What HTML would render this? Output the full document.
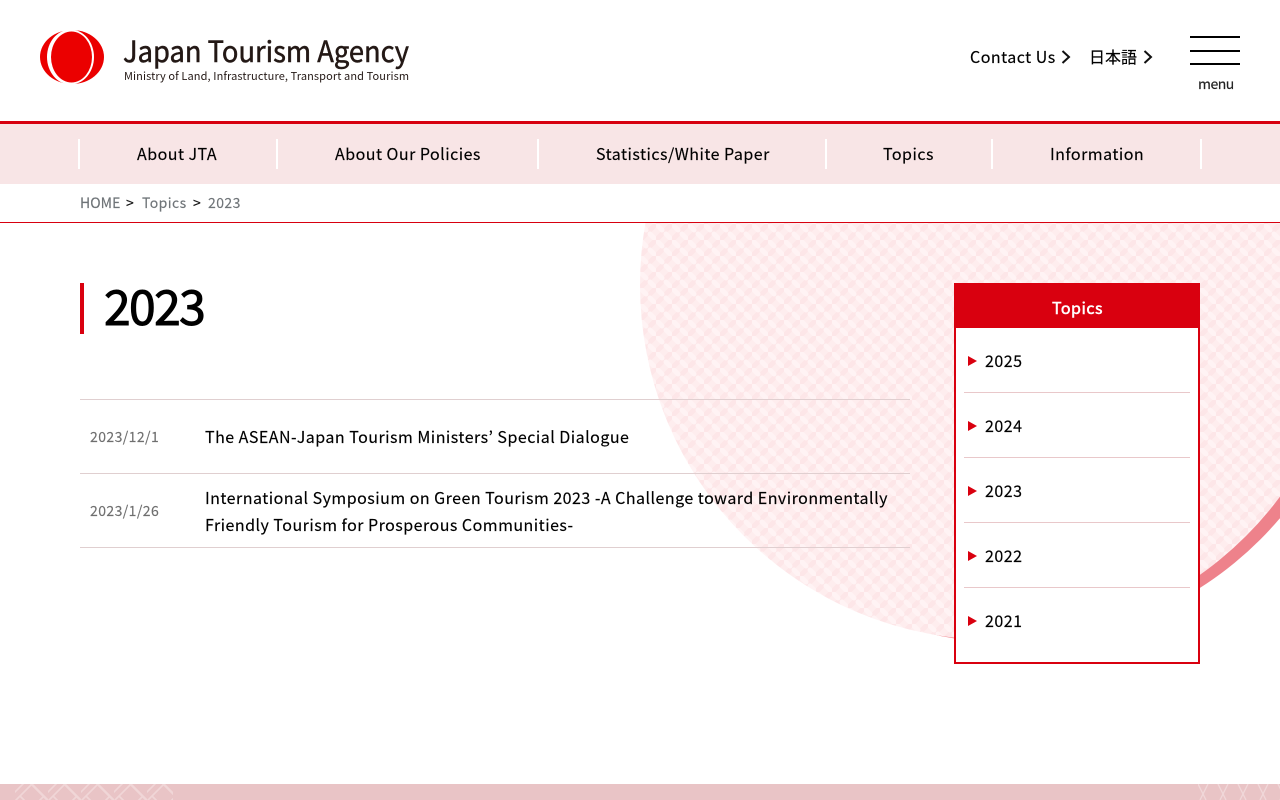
<!DOCTYPE html>
<html lang="en"><head><meta charset="utf-8"><title>2023 | Japan Tourism Agency</title>
<style>
html,body{margin:0;padding:0;background:#fff}
body{width:1280px;height:800px;position:relative;overflow:hidden;font-family:"Liberation Sans","Noto Sans CJK JP",sans-serif;color:#000}
.t{position:absolute;white-space:nowrap;font-family:"Noto Sans CJK JP","Liberation Sans",sans-serif;letter-spacing:.48px;line-height:1;-webkit-text-stroke:.15px currentColor}
.b{position:absolute}
.sep{position:absolute;top:139px;width:2px;height:30px;background:#fff}
.nav{font-size:16px;top:145px}
.bc{font-size:14px;top:196px;color:#6f7478;letter-spacing:.42px}
.li{font-size:16px;left:205px}
.dt{font-size:14px;left:90px;color:#6f6f6f;letter-spacing:.42px}
.yr{font-size:16px;left:985px}
.tri{position:absolute;left:968px;width:0;height:0;border-left:9px solid #d9000f;border-top:5px solid transparent;border-bottom:5px solid transparent}
.ln{position:absolute;left:964px;width:226px;height:1px;background:#e9c8ca}
.tl{position:absolute;left:80px;width:830px;height:1px;background:#e0cfd0}
</style></head><body>

<svg class="b" style="left:0;top:223px" width="1280" height="561" viewBox="0 223 1280 561">
<defs><pattern id="w" width="16" height="16" patternUnits="userSpaceOnUse">
<rect width="16" height="16" fill="#feedee"/>
<g stroke-width="5" stroke-linecap="round" fill="none">
<g stroke="#fde6e8"><path d="M14 2 L10 6"/><path d="M6 10 L2 14"/></g>
<g stroke="#fff3f4"><path d="M2 2 L6 6"/><path d="M10 10 L14 14"/></g>
</g></pattern></defs>
<circle cx="1010.6" cy="290" r="353" fill="#ee828b"/>
<circle cx="995" cy="285" r="355" fill="url(#w)"/>
</svg>

<svg class="b" style="left:0;top:0" width="440" height="120" viewBox="0 0 440 120">
<ellipse cx="72" cy="57" rx="32" ry="27" fill="#eb0000"/>
<ellipse cx="70.5" cy="57" rx="23.5" ry="27.5" fill="#fff"/>
<ellipse cx="71.5" cy="57" rx="20.5" ry="25.5" fill="#eb0000"/>
<text x="123" y="62" font-family="Noto Sans CJK JP,Liberation Sans,sans-serif" font-size="29" fill="#231815" stroke="#231815" stroke-width=".5" textLength="286" lengthAdjust="spacingAndGlyphs">Japan Tourism Agency</text>
<text x="124" y="80" font-family="Noto Sans CJK JP,Liberation Sans,sans-serif" font-size="11" fill="#231815" textLength="285" lengthAdjust="spacing">Ministry of Land, Infrastructure, Transport and Tourism</text>
</svg>

<div class="t" style="left:970px;top:48px;font-size:16px">Contact Us</div>
<svg class="b" style="left:1060px;top:49px" width="12" height="16"><path d="M2.5 2 L9 8 L2.5 14" fill="none" stroke="#111" stroke-width="2"/></svg>
<div class="t" style="left:1089px;top:48px;font-size:16px;letter-spacing:0">日本語</div>
<svg class="b" style="left:1142px;top:49px" width="12" height="16"><path d="M2.5 2 L9 8 L2.5 14" fill="none" stroke="#111" stroke-width="2"/></svg>
<div class="b" style="left:1190px;top:36px;width:50px;height:2px;background:#000"></div>
<div class="b" style="left:1190px;top:50px;width:50px;height:2px;background:#000"></div>
<div class="b" style="left:1190px;top:63px;width:50px;height:2px;background:#000"></div>
<div class="t" style="left:1198px;top:77px;font-size:14px;letter-spacing:-.5px;color:#222">menu</div>

<div class="b" style="left:0;top:121px;width:1280px;height:3px;background:#d7000f"></div>
<div class="b" style="left:0;top:124px;width:1280px;height:60px;background:#f8e5e6"></div>
<div class="sep" style="left:78px"></div>
<div class="sep" style="left:276px"></div>
<div class="sep" style="left:537px"></div>
<div class="sep" style="left:825px"></div>
<div class="sep" style="left:991px"></div>
<div class="sep" style="left:1200px"></div>
<div class="t nav" style="left:137px">About JTA</div>
<div class="t nav" style="left:335px">About Our Policies</div>
<div class="t nav" style="left:596px">Statistics/White Paper</div>
<div class="t nav" style="left:883px">Topics</div>
<div class="t nav" style="left:1050px">Information</div>

<div class="t bc" style="left:80px;letter-spacing:.05px">HOME</div>
<div class="t bc" style="left:126px;color:#111">&gt;</div>
<div class="t bc" style="left:142px">Topics</div>
<div class="t bc" style="left:193px;color:#111">&gt;</div>
<div class="t bc" style="left:208px">2023</div>
<div class="b" style="left:0;top:222px;width:1280px;height:1px;background:#d7000f"></div>

<div class="b" style="left:80px;top:283px;width:4px;height:51px;background:#d9000f"></div>
<div class="t" style="left:104px;top:280px;font-size:48px;letter-spacing:-1.6px;-webkit-text-stroke:1px #000">2023</div>

<div class="tl" style="top:399px"></div>
<div class="tl" style="top:473px"></div>
<div class="tl" style="top:547px"></div>
<div class="t dt" style="top:430px">2023/12/1</div>
<div class="t li" style="top:428px">The ASEAN-Japan Tourism Ministers’ Special Dialogue</div>
<div class="t dt" style="top:504px">2023/1/26</div>
<div class="t li" style="top:489px">International Symposium on Green Tourism 2023 -A Challenge toward Environmentally</div>
<div class="t li" style="top:516px">Friendly Tourism for Prosperous Communities-</div>

<div class="b" style="left:954px;top:283px;width:242px;height:377px;border:2px solid #d9000f;background:#fff"></div>
<div class="b" style="left:954px;top:283px;width:246px;height:45px;background:#d9000f"></div>
<div class="t" style="left:1052px;top:299px;font-size:16px;color:#fff;-webkit-text-stroke:.5px #fff">Topics</div>
<div class="tri" style="top:356px"></div><div class="t yr" style="top:352px">2025</div><div class="ln" style="top:392px"></div>
<div class="tri" style="top:421px"></div><div class="t yr" style="top:417px">2024</div><div class="ln" style="top:457px"></div>
<div class="tri" style="top:486px"></div><div class="t yr" style="top:482px">2023</div><div class="ln" style="top:522px"></div>
<div class="tri" style="top:551px"></div><div class="t yr" style="top:547px">2022</div><div class="ln" style="top:587px"></div>
<div class="tri" style="top:616px"></div><div class="t yr" style="top:612px">2021</div>

<svg class="b" style="left:0;top:784px" width="1280" height="16" viewBox="0 0 1280 16">
<defs>
<pattern id="f" x="15" y="0" width="33" height="33" patternUnits="userSpaceOnUse">
<path d="M-4 12 L12 -4 M12 -4 L33 17 M0 17 L17 0 M17 0 L34 17 M0 17 L17 34 M5 12 L17 24 L29 12" fill="none" stroke="#f0d6d7" stroke-width="1.6"/>
</pattern>
<pattern id="x" x="1196" y="0" width="20" height="20" patternUnits="userSpaceOnUse">
<path d="M2 0 L10 16 M12 0 L4 16" fill="none" stroke="#f0d8d9" stroke-width="1.3"/>
</pattern>
</defs>
<rect width="1280" height="16" fill="#e9c4c6"/>
<rect x="15" width="158" height="16" fill="url(#f)"/>
<rect x="1198" width="82" height="16" fill="url(#x)"/>
</svg>
</body></html>
